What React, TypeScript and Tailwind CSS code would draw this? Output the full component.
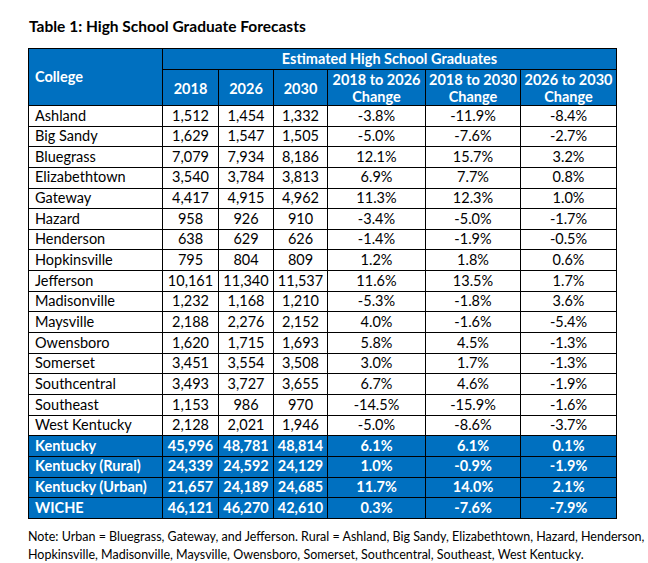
const rows: [string, string, string, string, string, string, string][] = [
  ["Ashland", "1,512", "1,454", "1,332", "-3.8%", "-11.9%", "-8.4%"],
  ["Big Sandy", "1,629", "1,547", "1,505", "-5.0%", "-7.6%", "-2.7%"],
  ["Bluegrass", "7,079", "7,934", "8,186", "12.1%", "15.7%", "3.2%"],
  ["Elizabethtown", "3,540", "3,784", "3,813", "6.9%", "7.7%", "0.8%"],
  ["Gateway", "4,417", "4,915", "4,962", "11.3%", "12.3%", "1.0%"],
  ["Hazard", "958", "926", "910", "-3.4%", "-5.0%", "-1.7%"],
  ["Henderson", "638", "629", "626", "-1.4%", "-1.9%", "-0.5%"],
  ["Hopkinsville", "795", "804", "809", "1.2%", "1.8%", "0.6%"],
  ["Jefferson", "10,161", "11,340", "11,537", "11.6%", "13.5%", "1.7%"],
  ["Madisonville", "1,232", "1,168", "1,210", "-5.3%", "-1.8%", "3.6%"],
  ["Maysville", "2,188", "2,276", "2,152", "4.0%", "-1.6%", "-5.4%"],
  ["Owensboro", "1,620", "1,715", "1,693", "5.8%", "4.5%", "-1.3%"],
  ["Somerset", "3,451", "3,554", "3,508", "3.0%", "1.7%", "-1.3%"],
  ["Southcentral", "3,493", "3,727", "3,655", "6.7%", "4.6%", "-1.9%"],
  ["Southeast", "1,153", "986", "970", "-14.5%", "-15.9%", "-1.6%"],
  ["West Kentucky", "2,128", "2,021", "1,946", "-5.0%", "-8.6%", "-3.7%"],
];

const totals: [string, string, string, string, string, string, string][] = [
  ["Kentucky", "45,996", "48,781", "48,814", "6.1%", "6.1%", "0.1%"],
  ["Kentucky (Rural)", "24,339", "24,592", "24,129", "1.0%", "-0.9%", "-1.9%"],
  ["Kentucky (Urban)", "21,657", "24,189", "24,685", "11.7%", "14.0%", "2.1%"],
  ["WICHE", "46,121", "46,270", "42,610", "0.3%", "-7.6%", "-7.9%"],
];

const cell = "border border-black h-[20.65px] p-0 leading-none";

export default function App() {
  return (
    <div className="min-h-[563px] w-[648px] bg-white pl-[28px] pt-[16px] font-['Lato','Liberation_Sans',sans-serif] text-[14.5px] text-black">
      <h1 className="pl-px text-[15.5px] leading-[20px] font-bold">Table 1: High School Graduate Forecasts</h1>
      <table className="mt-[12px] w-[588px] table-fixed border-collapse">
        <colgroup>
          <col className="w-[134px]" />
          <col className="w-[56px]" />
          <col className="w-[55px]" />
          <col className="w-[54px]" />
          <col className="w-[98px]" />
          <col className="w-[95px]" />
          <col className="w-[96px]" />
        </colgroup>
        <thead className="bg-[#0070c0] font-bold text-white">
          <tr>
            <th rowSpan={2} className="border border-black pl-[6px] text-left align-middle">
              College
            </th>
            <th colSpan={6} className="h-[21px] border border-black p-0 leading-none">
              Estimated High School Graduates
            </th>
          </tr>
          <tr>
            <th className="h-[36px] border border-black p-0 pt-[3px]">2018</th>
            <th className="border border-black p-0 pt-[3px]">2026</th>
            <th className="border border-black p-0 pt-[3px]">2030</th>
            <th className="border border-black p-0 leading-[17px]">2018 to 2026<br />Change</th>
            <th className="border border-black p-0 leading-[17px]">2018 to 2030<br />Change</th>
            <th className="border border-black p-0 leading-[17px]">2026 to 2030<br />Change</th>
          </tr>
        </thead>
        <tbody>
          {rows.map((r) => (
            <tr key={r[0]}>
              <td className={`${cell} pl-[6px] text-left`}>{r[0]}</td>
              {r.slice(1).map((v, i) => (
                <td key={i} className={`${cell} text-center`}>{v}</td>
              ))}
            </tr>
          ))}
          {totals.map((r) => (
            <tr key={r[0]} className="bg-[#0070c0] font-bold text-white">
              <td className={`${cell} pl-[6px] text-left`}>{r[0]}</td>
              {r.slice(1).map((v, i) => (
                <td key={i} className={`${cell} text-center`}>{v}</td>
              ))}
            </tr>
          ))}
        </tbody>
      </table>
      <p className="mt-[9px] whitespace-nowrap text-[12.5px] leading-[18px]">
        Note: Urban = Bluegrass, Gateway, and Jefferson. Rural = Ashland, Big Sandy, Elizabethtown, Hazard, Henderson,
        <br />
        Hopkinsville, Madisonville, Maysville, Owensboro, Somerset, Southcentral, Southeast, West Kentucky.
      </p>
    </div>
  );
}
